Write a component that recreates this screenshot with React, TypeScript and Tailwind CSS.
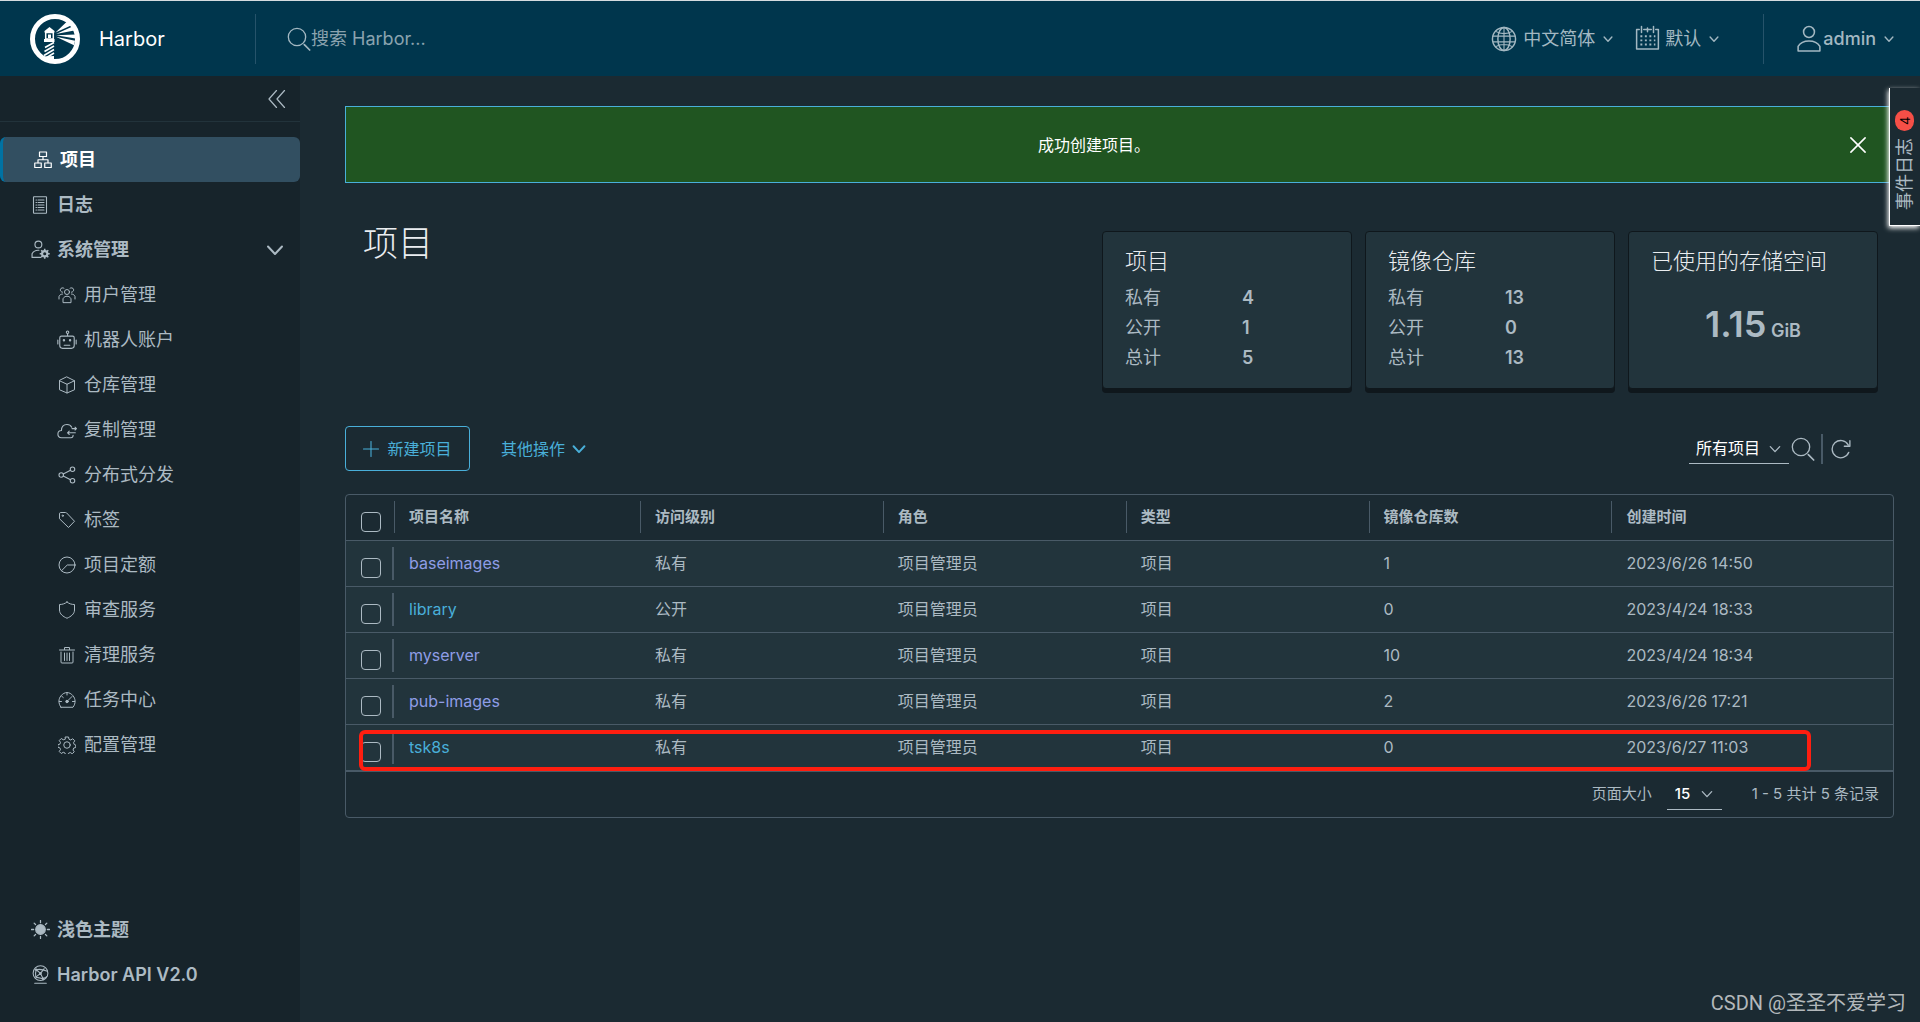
import type { ReactNode } from "react";

type IconProps = { className?: string; w?: number; children?: ReactNode };

function Svg({ className = "size-[18px]", w = 2, children }: IconProps) {
  return (
    <svg
      viewBox="0 0 36 36"
      className={`shrink-0 ${className}`}
      fill="none"
      stroke="currentColor"
      strokeWidth={w}
      strokeLinecap="round"
      strokeLinejoin="round"
      aria-hidden="true"
    >
      {children}
    </svg>
  );
}

const Chevron = ({ className, w = 5 }: IconProps) => (
  <Svg className={className} w={w}>
    <path d="M4 11 L18 26 L32 11" />
  </Svg>
);

const SearchIcon = ({ className }: IconProps) => (
  <Svg className={className}>
    <circle cx="15" cy="15" r="13" />
    <path d="M26 26.500 L34 34.500" strokeWidth="2.500" />
  </Svg>
);

const GlobeIcon = () => (
  <Svg className="size-[26px]">
    <circle cx="18" cy="18" r="16" />
    <ellipse cx="18" cy="18" rx="8.5" ry="16" />
    <path d="M18 2v32M3 14h30M3 22h30M6.500 7.500c6 4 17 4 23 0M6.500 28.500c6-4 17-4 23 0" strokeWidth="1.5" />
  </Svg>
);

const CalendarIcon = () => (
  <Svg className="size-[27px]">
    <path d="M7 6H3.500v26h29V6H29M13 6h10" />
    <path d="M10 2v8M26 2v8M18 4v5" />
    <path
      strokeWidth="2.6"
      strokeLinecap="butt"
      strokeDasharray="2.600 3.400"
      d="M8.500 15h20M8.500 20.500h20M8.500 26h20"
    />
  </Svg>
);

const UserIcon = () => (
  <Svg className="size-[28px]">
    <circle cx="18" cy="9" r="7" />
    <path d="M4 33.500v-6c3-5 8-7 14-7s11 2 14 7v6z" />
  </Svg>
);

const ProjectIcon = () => (
  <Svg className="size-[18px]" w={2.4}>
    <rect x="11" y="2" width="14" height="9" />
    <rect x="1.500" y="24" width="13" height="9" />
    <rect x="21.500" y="24" width="13" height="9" />
    <path d="M18 11v6M8 23.500V17.500h20v6" />
  </Svg>
);

const LogIcon = () => (
  <Svg className="size-[18px]" w={2.2}>
    <rect x="5" y="1.500" width="26" height="33" rx="1" />
    <path d="M10 8h1M14 8h12M10 13h1M14 13h12M10 18h1M14 18h12M10 23h1M14 23h12M10 28h1M14 28h12" />
  </Svg>
);

const AdminIcon = () => (
  <Svg className="size-[19px]" w={2.2}>
    <circle cx="14" cy="8.500" r="6.500" />
    <path d="M18 33H2v-7c3-5 8-7 13-6.500" />
    <circle cx="26" cy="26" r="5" strokeWidth="4" />
    <path
      strokeWidth="3"
      strokeLinecap="butt"
      d="M26 16.500v5M26 30.500v5M16.500 26h5M30.500 26h5M19.300 19.300l3.500 3.500M29.200 29.200l3.500 3.500M32.700 19.300l-3.500 3.500M22.800 29.200l-3.500 3.500"
    />
  </Svg>
);

const UsersIcon = () => (
  <Svg>
    <circle cx="18" cy="12" r="5" />
    <path d="M10 32.500v-7c2-4 5-5 8-5s6 1 8 5v7z" />
    <path d="M12 4.500a4.500 4.500 0 1 0-3 8M24 4.500a4.500 4.500 0 1 1 3 8M9 16c-4 0-6.500 3-7 5v5M27 16c4 0 6.500 3 7 5v5" />
  </Svg>
);

const RobotIcon = () => (
  <Svg className="size-5">
    <circle cx="19" cy="4" r="2.200" />
    <path d="M19 6.500V11M5 14c0-2 1-3 3-3h20c2 0 3 1 3 3v14c0 3-2 5-5 5H10c-3 0-5-2-5-5z" />
    <path d="M1.500 18v7M34.500 18v7M13 27.500h10" />
    <circle cx="12.500" cy="18.500" r="1.200" />
    <circle cx="23.500" cy="18.500" r="1.200" />
  </Svg>
);

const BoxIcon = () => (
  <Svg>
    <path d="M18 2L33 9.500v18L18 34 3 27.500v-18zM3 9.500l15 7 15-7M18 16.500V34" />
  </Svg>
);

const CloudIcon = () => (
  <Svg className="size-5">
    <path d="M29 27.500c0 3-1 4.500-4 4.500H8c-9-1-8-13 0-13 0-8 5-11 10-11 4 0 7 2 8.500 5" />
    <path d="M35 15.500H27M32.500 13l2.500 2.500-2.500 2.500M33 23H19M22 20l-3 3 3 3" />
  </Svg>
);

const ShareIcon = () => (
  <Svg w={2.2}>
    <circle cx="6.500" cy="18" r="4.500" />
    <circle cx="29" cy="6.500" r="4.500" />
    <circle cx="29" cy="29.500" r="4.500" />
    <path d="M10.500 16L25 8.500M10.500 20L25 27.500" />
  </Svg>
);

const TagIcon = () => (
  <Svg>
    <path d="M3 5c0-1 1-2 2-2h10c1 0 1.500 0 2 .6L33 20.500 21 33 3.500 16z" />
    <circle cx="9.500" cy="9.500" r="1.300" />
  </Svg>
);

const QuotaIcon = () => (
  <Svg>
    <circle cx="18" cy="18" r="16" />
    <path d="M34 18H18.500L7 29.500" />
  </Svg>
);

const ShieldIcon = () => (
  <Svg>
    <path d="M18 2c4 3.500 9 5 15 5v11c0 8-7 13-15 16.500C10 31 3 26 3 18V7c6 0 11-1.500 15-5z" />
  </Svg>
);

const TrashIcon = () => (
  <Svg>
    <path d="M3 8h30M13 7V3h10v4M6 12v20c0 1.500.5 2 2 2h20c1.500 0 2-.5 2-2V12M13 14v15M18 14v15M23 14v15" />
  </Svg>
);

const GaugeIcon = () => (
  <Svg>
    <path d="M6 32.500h24c6-8 5-17 0-23C23 1 13 1 6 9.500c-5 6-6 15 0 23z" />
    <path d="M18 3v5M2.500 21H7M29 21h4.500M7 10l3.500 3M20 19l8-8" />
    <circle cx="18" cy="21" r="2.500" fill="currentColor" />
  </Svg>
);

const GearIcon = () => (
  <Svg>
    <circle cx="18" cy="18" r="6.500" />
    <path d="M15 2h6l1 4.500 3.500 1.500 4-2.500 4 4-2.500 4 1.500 3.500 3 1v5l-4 1-1.500 4 2.500 3.500-4 4-4-2.500-3.500 1.500-1 3h-5l-1-3.500-3.500-1.500-4 2.500-4-4 2.500-4-1.500-3.500-4-1v-5l4-1 1.500-3.500-2.500-4 4-4 4 2.500L14 6.500z" />
  </Svg>
);

const SunIcon = () => (
  <Svg className="size-[19px]" w={2.4}>
    <circle cx="18" cy="18" r="9" fill="currentColor" />
    <path d="M18 1v4M18 31v4M1 18h4M31 18h4M6 6l2.600 2.600M27.400 27.400L30 30M30 6l-2.600 2.600M8.600 27.400L6 30" />
  </Svg>
);

const ApiIcon = () => (
  <Svg className="size-[19px]">
    <circle cx="18" cy="15.500" r="14" />
    <path d="M7 34.500h22M10 9c7-2 14 0 21 3M10 9c-2 5-2 8-1 14M10 9l8 7 7-9M18 16l-9 7 14 3zM18 16l5 10 7-4" />
    <circle cx="18" cy="16" r="1.500" fill="currentColor" />
    <circle cx="10" cy="9" r="1.500" fill="currentColor" />
    <circle cx="23" cy="26" r="1.500" fill="currentColor" />
  </Svg>
);

const HarborLogo = () => (
  <svg viewBox="0 0 50 50" className="size-[50px] shrink-0" aria-hidden="true">
    <circle cx="25" cy="25" r="22.500" fill="none" stroke="#fff" strokeWidth="5" />
    <path fill="#fff" d="M25.500 18.500L37 7.500l4 4zM26 20l16.500-7.500 1.800 4zM26 21.200l19.500-.7v4zM26 22.800l19 4-1 4.500z" />
    <path fill="#fff" d="M19.500 13l5 4v1.500h-10V17z" />
    <path fill="none" stroke="#fff" strokeWidth="1.500" d="M15.700 18.500h7.600v6.500h-7.600z" />
    <path fill="#fff" d="M18 20.500h3v3.500h-3zM14 25h10.500v3H14z" />
    <path fill="none" stroke="#fff" strokeWidth="1.700" d="M15 33.500l9-5M14.500 37.500l9.500-5.500M14 41.500l10-6M16 44l8-5" />
    <path fill="#fff" d="M13.500 42.500l10.500-.5v6l-10.500-1.500z" />
  </svg>
);

const subItems: [string, () => ReactNode][] = [
  ["用户管理", UsersIcon],
  ["机器人账户", RobotIcon],
  ["仓库管理", BoxIcon],
  ["复制管理", CloudIcon],
  ["分布式分发", ShareIcon],
  ["标签", TagIcon],
  ["项目定额", QuotaIcon],
  ["审查服务", ShieldIcon],
  ["清理服务", TrashIcon],
  ["任务中心", GaugeIcon],
  ["配置管理", GearIcon],
];

const columns = ["项目名称", "访问级别", "角色", "类型", "镜像仓库数", "创建时间"];

const projects = [
  { name: "baseimages", access: "私有", repos: 1, created: "2023/6/26 14:50", visited: true },
  { name: "library", access: "公开", repos: 0, created: "2023/4/24 18:33", visited: false },
  { name: "myserver", access: "私有", repos: 10, created: "2023/4/24 18:34", visited: true },
  { name: "pub-images", access: "私有", repos: 2, created: "2023/6/26 17:21", visited: true },
  { name: "tsk8s", access: "私有", repos: 0, created: "2023/6/27 11:03", visited: false },
];

function Header() {
  return (
    <header className="flex h-[76px] items-center border-t border-[#d5dce0] bg-[#00364d] text-[18px] text-[#a3b8c2]">
      <a href="#" className="flex w-[255px] items-center gap-[19px] pl-[30px] text-[20px] text-white">
        <HarborLogo />
        Harbor
      </a>
      <div className="h-[50px] w-px bg-[#26536a]" />
      <label className="ml-[31px] flex flex-1 items-center">
        <SearchIcon className="size-6" />
        <input
          type="text"
          aria-label="搜索 Harbor"
          placeholder="搜索 Harbor..."
          className="w-80 bg-transparent outline-none placeholder:text-[#8ba3af]"
        />
      </label>
      <button className="flex items-center">
        <GlobeIcon />
        <span className="ml-1.5">中文简体</span>
        <Chevron className="ml-2 size-2.5" />
      </button>
      <button className="ml-[21px] flex items-center">
        <CalendarIcon />
        <span className="ml-1">默认</span>
        <Chevron className="ml-2 size-2.5" />
      </button>
      <div className="ml-11 h-[50px] w-px bg-[#26536a]" />
      <button className="ml-[31px] mr-[26px] flex items-center font-medium">
        <UserIcon />
        <span>admin</span>
        <Chevron className="ml-2 size-2.5" />
      </button>
    </header>
  );
}

function Sidebar() {
  return (
    <nav className="flex w-[300px] shrink-0 flex-col bg-[#17242b] pb-[25px] text-[18px] leading-[45px] text-[#acbac3]">
      <div className="mb-[15px] flex h-[46px] items-center justify-end border-b border-[#22333b] pr-[14px]">
        <button aria-label="收起">
          <Svg className="size-[18px]" w={2.4}>
            <path d="M17 1L2 18l15 17M33 1L18 18l15 17" />
          </Svg>
        </button>
      </div>
      <a
        href="#"
        className="flex h-[45px] items-center gap-2 rounded-md border-l-[3px] border-[#0072a3] bg-[#324f61] pl-[31px] font-bold text-white"
      >
        <ProjectIcon />
        项目
      </a>
      <a href="#" className="flex h-[45px] items-center gap-2 pl-[31px] font-bold">
        <LogIcon />
        日志
      </a>
      <button className="flex h-[45px] items-center gap-[7px] pl-[31px] pr-4 text-left font-bold">
        <AdminIcon />
        <span className="flex-1">系统管理</span>
        <Chevron className="size-[18px]" w={4} />
      </button>
      {subItems.map(([label, Icon]) => (
        <a key={label} href="#" className="flex h-[45px] items-center pl-[58px]">
          <span className="-ml-px mr-[7px] flex w-5 justify-center">
            <Icon />
          </span>
          {label}
        </a>
      ))}
      <button className="mt-auto flex h-[45px] items-center gap-[7px] pl-[31px] font-bold">
        <SunIcon />
        浅色主题
      </button>
      <a href="#" className="flex h-[45px] items-center gap-[7px] pl-[31px] font-semibold">
        <ApiIcon />
        Harbor API V2.0
      </a>
    </nav>
  );
}

function Card({ title, children }: { title: string; children: ReactNode }) {
  return (
    <section className="h-[158px] w-[250px] rounded border border-[#0f171c] bg-[#22343c] px-[22px] pt-3 shadow-[0_4px_0_#0f171c]">
      <h2 className="text-[22px] font-light leading-[34px] text-[#eaedf0]">{title}</h2>
      {children}
    </section>
  );
}

function Stats({ rows }: { rows: [string, number][] }) {
  return (
    <dl className="mt-[5px] grid grid-cols-[117px_1fr] text-[18px] leading-[30px] text-[#acbac3]">
      {rows.map(([label, value]) => (
        <div key={label} className="contents">
          <dt>{label}</dt>
          <dd className="font-semibold">{value}</dd>
        </div>
      ))}
    </dl>
  );
}

const boxClass =
  "mt-2.5 block size-5 appearance-none rounded border border-[#acbac3] bg-transparent checked:bg-[#49afd9]";

function ProjectTable() {
  return (
    <div className="mt-[23px] rounded border border-[#495a67]">
      <div className="relative">
        <table className="w-full table-fixed border-collapse text-left text-[16px] text-[#acbac3]">
          <colgroup>
            <col className="w-12" />
            <col className="w-[15.9%]" />
            <col className="w-[15.7%]" />
            <col className="w-[15.7%]" />
            <col className="w-[15.7%]" />
            <col className="w-[15.7%]" />
            <col />
          </colgroup>
          <thead>
            <tr className="h-[45px] border-b border-[#495a67] text-[15px]">
              <th className="pl-[15px]">
                <input type="checkbox" aria-label="全选" className={boxClass} />
              </th>
              {columns.map((c) => (
                <th key={c} className="p-0">
                  <div className="flex h-8 items-center border-l border-[#495a67] pl-[14px] font-bold">{c}</div>
                </th>
              ))}
            </tr>
          </thead>
          <tbody>
            {projects.map((p) => (
              <tr key={p.name} className="h-[46px] border-b border-[#495a67] bg-[#22343c]">
                <td className="p-0">
                  <div className="flex h-[33px] items-center border-r-2 border-[#495a67] pl-[15px]">
                    <input type="checkbox" aria-label={p.name} className={boxClass} />
                  </div>
                </td>
                <td className="pl-[15px]">
                  <a href="#" className={p.visited ? "text-[#8f9de6]" : "text-[#49afd9]"}>
                    {p.name}
                  </a>
                </td>
                <td className="pl-[15px]">{p.access}</td>
                <td className="pl-[15px]">项目管理员</td>
                <td className="pl-[15px]">项目</td>
                <td className="pl-[15px]">{p.repos}</td>
                <td className="pl-[15px]">{p.created}</td>
              </tr>
            ))}
          </tbody>
        </table>
        <div className="pointer-events-none absolute bottom-0 left-[13px] right-[82px] h-[41px] rounded-md border-4 border-[#ff1e10]" />
      </div>
      <div className="flex h-[46px] items-center justify-end border-t border-[#495a67] pr-[14px] text-[15px] text-[#acbac3]">
        <label htmlFor="page-size">页面大小</label>
        <div className="relative ml-[15px] mr-[30px] mt-[2px]">
          <select
            id="page-size"
            className="h-[30px] w-[55px] appearance-none border-b border-[#acbac3] bg-transparent pl-2 font-medium text-white"
          >
            <option>15</option>
          </select>
          <Chevron className="pointer-events-none absolute right-[9px] top-2 size-3" w={4} />
        </div>
        <span>1 - 5 共计 5 条记录</span>
      </div>
    </div>
  );
}

export default function App() {
  return (
    <div className="relative flex min-h-screen flex-col overflow-x-hidden bg-[#1b2a32] font-['Inter','Noto_Sans_CJK_SC',sans-serif]">
      <Header />
      <div className="flex flex-1">
        <Sidebar />
        <main className="min-w-0 flex-1 pl-[45px] pr-[26px] pt-[30px]">
          <div role="alert" className="flex h-[77px] items-center border border-[#49afd9] bg-[#205521] text-[16px] text-white">
            <span className="flex-1 pr-2 text-center">成功创建项目。</span>
            <button aria-label="关闭" className="mr-[27px]">
              <Svg className="size-4" w={3.5}>
                <path d="M2 2l32 32M34 2L2 34" />
              </Svg>
            </button>
          </div>

          <div className="mt-12 flex justify-between pl-[18px] pr-4">
            <h1 className="text-[35px] font-light leading-6 text-[#eaedf0]">项目</h1>
            <div className="flex gap-[13px]">
              <Card title="项目">
                <Stats rows={[["私有", 4], ["公开", 1], ["总计", 5]]} />
              </Card>
              <Card title="镜像仓库">
                <Stats rows={[["私有", 13], ["公开", 0], ["总计", 13]]} />
              </Card>
              <Card title="已使用的存储空间">
                <p className="mt-[25px] text-center text-[18px] font-semibold text-[#acbac3]">
                  <span className="text-[36px] leading-[42px]">1.15</span> GiB
                </p>
              </Card>
            </div>
          </div>

          <div className="mt-[37px] flex h-[45px] items-center text-[16px] text-[#49afd9]">
            <button className="flex h-[45px] w-[125px] items-center justify-center gap-2 rounded border border-[#49afd9]">
              <Svg className="size-4" w={2.4}>
                <path d="M18 1v34M1 18h34" />
              </Svg>
              新建项目
            </button>
            <button className="ml-[31px] flex items-center gap-[7px]">
              其他操作
              <Chevron className="size-3.5" w={5} />
            </button>
            <div className="relative ml-auto">
              <select
                aria-label="项目范围"
                className="h-[30px] w-[100px] appearance-none border-b border-[#acbac3] bg-transparent pl-[7px] text-[16px] text-white"
              >
                <option>所有项目</option>
              </select>
              <Chevron className="pointer-events-none absolute right-2 top-[9px] size-3 text-[#acbac3]" w={4} />
            </div>
            <button aria-label="搜索" className="ml-0.5 text-[#acbac3]">
              <SearchIcon className="size-6" />
            </button>
            <div className="ml-1.5 h-[30px] w-0.5 bg-[#495a67]" />
            <button aria-label="刷新" className="ml-2 mr-[43px] text-[#acbac3]">
              <Svg className="size-5" w={2.4}>
                <path d="M32 24a15.500 15.500 0 1 1-1-13.500M34 3v10H24" />
              </Svg>
            </button>
          </div>

          <ProjectTable />
        </main>
      </div>

      <button className="absolute right-0 top-[88px] flex h-[138px] w-[31px] rotate-180 items-center gap-[7px] border-r border-t border-white bg-[#1b2a32] pt-[15px] text-[18px] leading-[30px] text-[#acbac3] shadow-[1px_-2px_5px_#fff] [writing-mode:vertical-rl]">
        <span className="[text-orientation:sideways]">事件日志</span>
        <span className="flex h-[21px] w-[19px] items-center justify-center rounded-full bg-[#f54f47] text-[13px] text-black">
          4
        </span>
      </button>

      <p className="absolute bottom-[5px] right-[14px] font-['Roboto','Noto_Sans_CJK_SC',sans-serif] text-[20px] leading-7 text-[#b3b8bb]">
        CSDN @圣圣不爱学习
      </p>
    </div>
  );
}
